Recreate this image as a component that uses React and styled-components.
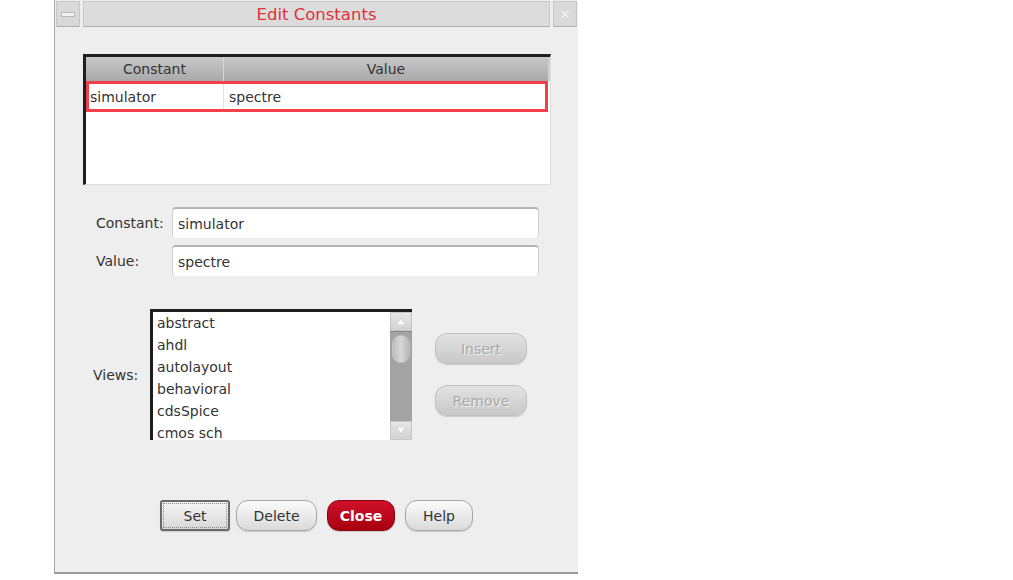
import React from "react";
import styled, { createGlobalStyle } from "styled-components";

const GlobalStyle = createGlobalStyle`
  html, body {
    margin: 0;
    padding: 0;
    background: #ffffff;
  }
  body {
    font-family: "DejaVu Sans", "Liberation Sans", sans-serif;
    font-size: 14px;
    color: #333;
  }
`;

const Window = styled.div`
  width: 523px;
  height: 572px;
  margin-left: 54px;
  background: #eeeeee;
  border-left: 1px solid #a8a8a8;
  border-bottom: 2px solid #9a9a9a;
  display: flex;
  flex-direction: column;
`;

const TitleBar = styled.div`
  height: 26px;
  padding: 1px 1px 0 1px;
  display: flex;
  gap: 3px;
`;

const TitleButton = styled.div`
  width: 22px;
  background: #d9d9d9;
  border: 1px solid #c6c6c6;
  border-bottom-color: #b0b0b0;
  display: flex;
  align-items: center;
  justify-content: center;
  color: #f4f4f4;
  font-size: 13px;
`;

const MinusBar = styled.span`
  width: 12px;
  height: 3px;
  background: #f2f2f2;
  border: 1px solid #b8b8b8;
`;

const Title = styled.div`
  flex: 1;
  background: #dcdcdc;
  border: 1px solid #c8c8c8;
  border-bottom-color: #b0b0b0;
  display: flex;
  align-items: center;
  justify-content: center;
  color: #e0303a;
  font-size: 16.5px;
`;

const Body = styled.div`
  flex: 1;
  display: flex;
  flex-direction: column;
  padding: 27px 0 0 28px;
`;

const Table = styled.div`
  width: 464px;
  height: 127px;
  background: #ffffff;
  border-top: 3px solid #1e1e1e;
  border-left: 3px solid #1e1e1e;
  border-right: 1px solid #dddddd;
  border-bottom: 1px solid #dddddd;
  display: flex;
  flex-direction: column;
`;

const HeaderRow = styled.div`
  height: 24px;
  display: grid;
  grid-template-columns: 137px 1fr;
  background: linear-gradient(#c8c8c8, #a9a9a9);
  border-right: 2px solid #cfcfcf;
`;

const HeaderCell = styled.div`
  display: flex;
  align-items: center;
  justify-content: center;
  color: #333;
  font-size: 14px;
  & + & {
    border-left: 1px solid #d8d8d8;
  }
`;

const DataRow = styled.div`
  height: 25px;
  margin-right: 2px;
  display: grid;
  grid-template-columns: 134px 1fr;
  border: 3px solid #f2404a;
`;

const DataCell = styled.div`
  display: flex;
  align-items: center;
  padding-left: 1px;
  color: #333;
  & + & {
    border-left: 1px solid #e0e0e0;
    padding-left: 5px;
  }
`;

const FormRow = styled.div`
  display: flex;
  align-items: center;
  margin-top: ${(p) => p.$top}px;
`;

const Label = styled.div`
  width: 89px;
  padding-left: 13px;
  box-sizing: border-box;
  color: #333;
`;

const Input = styled.div`
  width: 367px;
  height: 31px;
  box-sizing: border-box;
  background: #ffffff;
  border-radius: 4px;
  border-top: 2px solid #b4b4b4;
  border-left: 1px solid #d0d0d0;
  border-right: 1px solid #d0d0d0;
  display: flex;
  align-items: center;
  padding-left: 5px;
  color: #333;
`;

const ViewsRow = styled.div`
  display: flex;
  align-items: center;
  margin-top: 33px;
`;

const ViewsLabel = styled.div`
  width: 67px;
  padding-left: 10px;
  box-sizing: border-box;
`;

const List = styled.div`
  width: 259px;
  height: 128px;
  background: #ffffff;
  border-top: 3px solid #1e1e1e;
  border-left: 3px solid #1e1e1e;
  display: flex;
  overflow: hidden;
`;

const Items = styled.div`
  flex: 1;
  padding-left: 4px;
`;

const Item = styled.div`
  height: 22px;
  line-height: 22px;
  color: #333;
  white-space: nowrap;
`;

const Scrollbar = styled.div`
  width: 22px;
  display: flex;
  flex-direction: column;
  background: #a3a3a3;
`;

const ArrowCell = styled.div`
  height: 19px;
  background: linear-gradient(#e6e6e6, #d2d2d2);
  border: 1px solid #c6c6c6;
  box-sizing: border-box;
  display: flex;
  align-items: center;
  justify-content: center;
`;

const Track = styled.div`
  flex: 1;
  padding-top: 3px;
  display: flex;
  justify-content: center;
  border-top: 1px solid #888;
`;

const Thumb = styled.div`
  width: 18px;
  height: 28px;
  border-radius: 9px;
  background: linear-gradient(90deg, #bdbdbd, #d8d8d8 50%, #b8b8b8);
  border: 1px solid #c4c4c4;
  box-sizing: border-box;
`;

const SideButtons = styled.div`
  display: flex;
  flex-direction: column;
  gap: 21px;
  margin-left: 23px;
`;

const PillButton = styled.div`
  height: 31px;
  width: ${(p) => p.$w}px;
  margin-left: ${(p) => p.$gap || 0}px;
  box-sizing: border-box;
  border-radius: 12px;
  display: flex;
  align-items: center;
  justify-content: center;
  font-size: 14px;
  background: ${(p) =>
    p.$danger
      ? "linear-gradient(#d0102a, #a8000e)"
      : p.$disabled
      ? "linear-gradient(#e2e2e2, #c8c8c8)"
      : "linear-gradient(#fbfbfb, #dadada)"};
  border: 1px solid
    ${(p) => (p.$danger ? "#8a0010" : p.$disabled ? "#c0c0c0" : "#a6a6a6")};
  color: ${(p) => (p.$danger ? "#ffffff" : p.$disabled ? "#a8a8a8" : "#333")};
  font-weight: ${(p) => (p.$danger ? "bold" : "normal")};
  text-shadow: ${(p) => (p.$disabled ? "1px 1px 0 #f4f4f4" : "none")};
  box-shadow: 0 1px 1px rgba(0, 0, 0, 0.15);
`;

const DefaultButton = styled(PillButton)`
  border-radius: 3px;
  border: 2px solid #6a6a6a;
  outline: 1px dotted #888;
  outline-offset: -4px;
  background: linear-gradient(#f6f6f6, #d8d8d8);
`;

const ButtonBar = styled.div`
  display: flex;
  justify-content: center;
  margin-top: 60px;
  margin-left: -28px;
`;

const views = ["abstract", "ahdl", "autolayout", "behavioral", "cdsSpice", "cmos sch"];

export default function App() {
  return (
    <>
      <GlobalStyle />
      <Window>
        <TitleBar>
          <TitleButton>
            <MinusBar />
          </TitleButton>
          <Title>Edit Constants</Title>
          <TitleButton>✕</TitleButton>
        </TitleBar>
        <Body>
          <Table>
            <HeaderRow>
              <HeaderCell>Constant</HeaderCell>
              <HeaderCell>Value</HeaderCell>
            </HeaderRow>
            <DataRow>
              <DataCell>simulator</DataCell>
              <DataCell>spectre</DataCell>
            </DataRow>
          </Table>
          <FormRow $top={22}>
            <Label>Constant:</Label>
            <Input>simulator</Input>
          </FormRow>
          <FormRow $top={7}>
            <Label>Value:</Label>
            <Input>spectre</Input>
          </FormRow>
          <ViewsRow>
            <ViewsLabel>Views:</ViewsLabel>
            <List>
              <Items>
                {views.map((v) => (
                  <Item key={v}>{v}</Item>
                ))}
              </Items>
              <Scrollbar>
                <ArrowCell>
                  <svg width="10" height="7" viewBox="0 0 10 7">
                    <path d="M5 0 L10 7 L0 7 Z" fill="#f8f8f8" stroke="#bbb" strokeWidth="0.6" />
                  </svg>
                </ArrowCell>
                <Track>
                  <Thumb />
                </Track>
                <ArrowCell>
                  <svg width="10" height="7" viewBox="0 0 10 7">
                    <path d="M0 0 L10 0 L5 7 Z" fill="#f8f8f8" stroke="#bbb" strokeWidth="0.6" />
                  </svg>
                </ArrowCell>
              </Scrollbar>
            </List>
            <SideButtons>
              <PillButton $w={92} $disabled>
                Insert
              </PillButton>
              <PillButton $w={92} $disabled>
                Remove
              </PillButton>
            </SideButtons>
          </ViewsRow>
          <ButtonBar>
            <DefaultButton $w={70}>Set</DefaultButton>
            <PillButton $w={81} $gap={6}>
              Delete
            </PillButton>
            <PillButton $w={68} $gap={10} $danger>
              Close
            </PillButton>
            <PillButton $w={68} $gap={10}>
              Help
            </PillButton>
          </ButtonBar>
        </Body>
      </Window>
    </>
  );
}
